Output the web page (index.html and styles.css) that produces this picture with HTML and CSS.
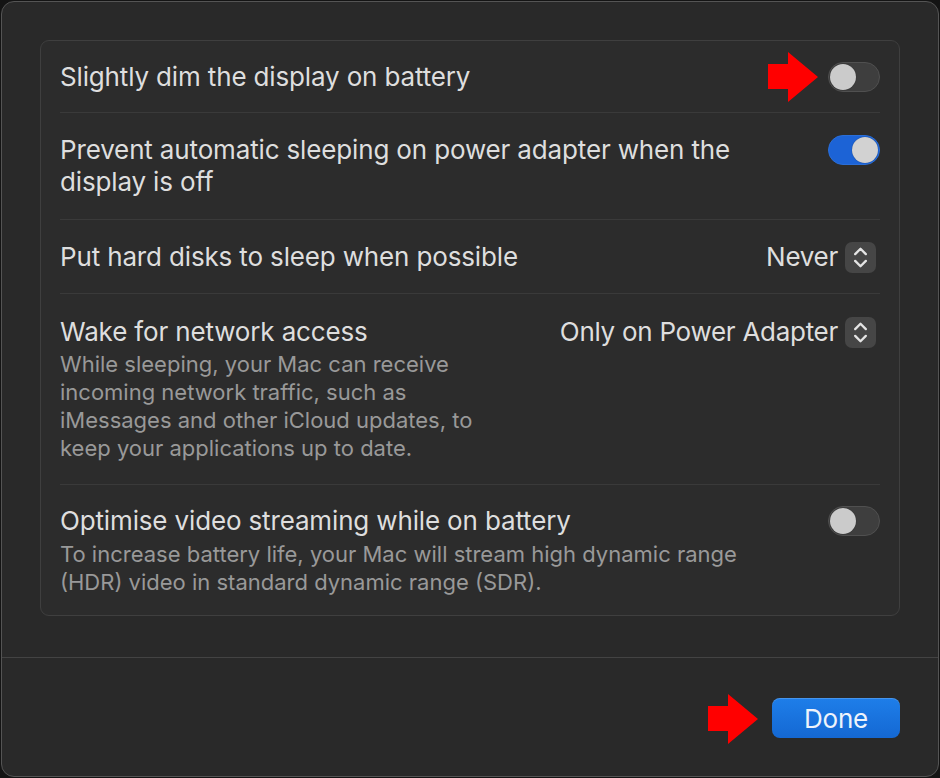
FILE: index.html
```html
<!DOCTYPE html>
<html lang="en">
<head>
<meta charset="utf-8">
<title>Battery Options</title>
<link rel="stylesheet" href="styles.css">
</head>
<body>
<div class="window">
  <div class="main">
    <div class="card">
      <div class="row row-1">
        <div class="text"><div class="title">Slightly dim the display on battery</div></div>
        <div class="control">
          <svg class="arrow" width="50" height="50" viewBox="0 0 50 50"><polygon points="0,12 20,12 20,0 50,25 20,50 20,37 0,37" /></svg>
          <div class="toggle"><span class="knob"></span></div>
        </div>
      </div>
      <div class="row row-2">
        <div class="text"><div class="title">Prevent automatic sleeping on power adapter when the display is off</div></div>
        <div class="control control-top">
          <div class="toggle on"><span class="knob"></span></div>
        </div>
      </div>
      <div class="row row-3">
        <div class="text"><div class="title">Put hard disks to sleep when possible</div></div>
        <div class="control">
          <span class="value">Never</span>
          <span class="stepper"><svg width="31" height="31" viewBox="0 0 32 32"><path d="M10.5 12.5 L16 7 L21.5 12.5 M10.5 19.5 L16 25 L21.5 19.5" /></svg></span>
        </div>
      </div>
      <div class="row row-4">
        <div class="text">
          <div class="title">Wake for network access</div>
          <div class="desc">While sleeping, your Mac can receive incoming network traffic, such as iMessages and other iCloud updates, to keep your applications up to date.</div>
        </div>
        <div class="control control-top">
          <span class="value">Only on Power Adapter</span>
          <span class="stepper"><svg width="31" height="31" viewBox="0 0 32 32"><path d="M10.5 12.5 L16 7 L21.5 12.5 M10.5 19.5 L16 25 L21.5 19.5" /></svg></span>
        </div>
      </div>
      <div class="row row-5">
        <div class="text">
          <div class="title">Optimise video streaming while on battery</div>
          <div class="desc desc-wide">To increase battery life, your Mac will stream high dynamic range (HDR) video in standard dynamic range (SDR).</div>
        </div>
        <div class="control control-top">
          <div class="toggle"><span class="knob"></span></div>
        </div>
      </div>
    </div>
  </div>
  <div class="footer">
    <div class="btn-wrap">
      <svg class="arrow arrow-btn" width="50" height="50" viewBox="0 0 50 50"><polygon points="0,12 20,12 20,0 50,25 20,50 20,37 0,37" /></svg>
      <button class="done">Done</button>
    </div>
  </div>
</div>
</body>
</html>
```

FILE: styles.css
```css
* { box-sizing: border-box; }
html, body { margin: 0; padding: 0; }
body {
  background: #141414;
  width: 940px;
  height: 778px;
  font-family: Inter, "Noto Sans", "Liberation Sans", sans-serif;
  -webkit-font-smoothing: antialiased;
}
.window {
  margin: 1px;
  width: 938px;
  height: 776px;
  background: #292929;
  border: 1px solid #545454;
  border-radius: 13px;
  display: flex;
  flex-direction: column;
  overflow: hidden;
}
.main {
  padding: 38px 38px 41px 38px;
}
.card {
  background: #2c2c2c;
  border: 1px solid #3f3f3f;
  border-radius: 9px;
  padding: 0 19px;
}
.row {
  display: flex;
  align-items: center;
  justify-content: space-between;
  border-bottom: 1px solid #3a3a3a;
  padding: 20px 0 19px;
}
.row:last-child { border-bottom: none; }
.row-2 { padding: 21px 0 21px; align-items: flex-start; }
.row-3 { padding: 21px 0 20px; }
.row-4 { padding: 22px 0 22px; align-items: flex-start; }
.row-5 { padding: 20px 0 19px; align-items: flex-start; }
.row-5 .desc { margin-top: 3px; }
.text { flex: 1; min-width: 0; }
.title {
  font-size: 26px;
  line-height: 32px;
  color: #dedede;
  letter-spacing: -0.15px;
}
.row-2 .title { max-width: 700px; }
.desc {
  margin-top: 2px;
  font-size: 22px;
  line-height: 28px;
  color: #999999;
  letter-spacing: 0;
  max-width: 440px;
}
.desc-wide { max-width: 700px; }
.control {
  position: relative;
  display: flex;
  align-items: center;
  flex: none;
}
.control-top { height: 32px; }
.toggle {
  width: 52px;
  height: 30px;
  border-radius: 15px;
  background: #3e3e3e;
  border: 1px solid #505050;
  position: relative;
}
.knob {
  position: absolute;
  top: 1px;
  left: 1px;
  width: 26px;
  height: 26px;
  border-radius: 50%;
  background: #cbcbcb;
  box-shadow: 0 0 1px rgba(0,0,0,0.5);
}
.toggle.on {
  background: #1c63d6;
  border-color: #2a6ed8;
}
.toggle.on .knob {
  left: auto;
  right: 1px;
  background: #d2d2d2;
}
.value {
  font-size: 26px;
  line-height: 32px;
  color: #dedede;
  letter-spacing: -0.28px;
  margin-right: 7px;
}
.stepper {
  width: 31px;
  height: 31px;
  border-radius: 7px;
  background: #464646;
  margin-right: 4px;
  display: flex;
}
.stepper path {
  fill: none;
  stroke: #e4e4e4;
  stroke-width: 2.4;
  stroke-linecap: round;
  stroke-linejoin: round;
}
.arrow {
  position: absolute;
  right: calc(100% + 10px);
  top: 50%;
  transform: translateY(-50%);
}
.arrow polygon { fill: #ff0000; }
.arrow-btn { right: calc(100% + 14px); margin-top: 1px; }
.footer {
  flex: 1;
  border-top: 1px solid #434343;
  display: flex;
  justify-content: flex-end;
  align-items: flex-start;
  padding: 40px 38px 0 0;
}
.btn-wrap { position: relative; }
.done {
  width: 128px;
  height: 40px;
  border: none;
  border-radius: 8px;
  background: linear-gradient(#1e7ee9, #1468d3);
  box-shadow: inset 0 1px 0 rgba(255,255,255,0.18);
  color: #eef3fb;
  font-family: Inter, "Noto Sans", "Liberation Sans", sans-serif;
  font-size: 26px;
  letter-spacing: -0.2px;
  padding: 0;
  display: block;
}
```
